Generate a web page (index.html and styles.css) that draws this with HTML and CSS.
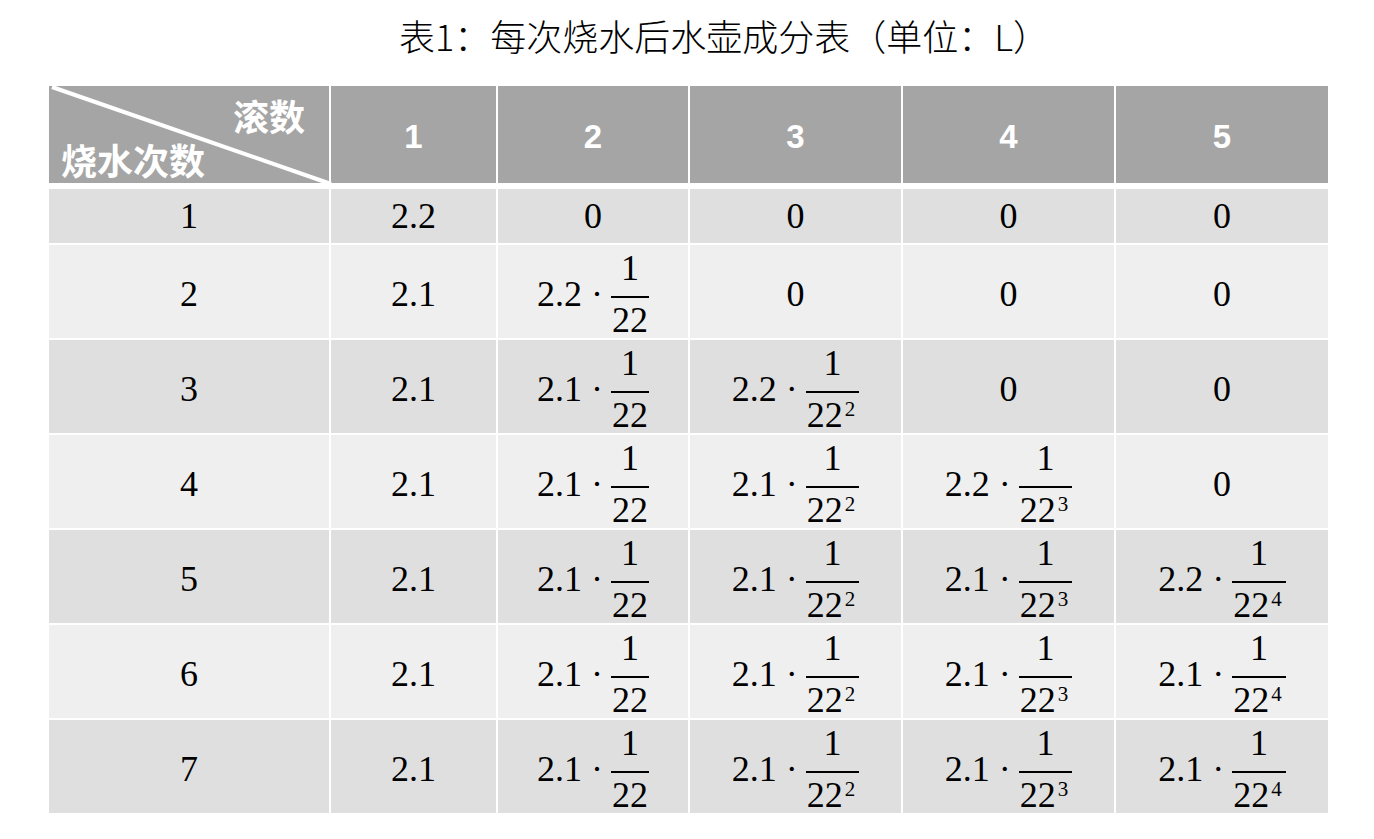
FILE: index.html
```html
<!DOCTYPE html>
<html lang="zh-CN">
<head>
<meta charset="utf-8">
<title>表1：每次烧水后水壶成分表</title>
<link rel="stylesheet" href="styles.css">
</head>
<body>
<div class="page">
  <h1 class="title">表1：每次烧水后水壶成分表（单位：L）</h1>
  <div class="table">
    <div class="row head">
      <div class="cell corner">
        <svg class="diag" viewBox="0 0 280 97" preserveAspectRatio="none"><line x1="3" y1="1" x2="282" y2="98" stroke="#fff" stroke-width="4"/></svg>
        <span class="c-top">滚数</span>
        <span class="c-bot">烧水次数</span>
      </div>
      <div class="cell hnum">1</div>
      <div class="cell hnum">2</div>
      <div class="cell hnum">3</div>
      <div class="cell hnum">4</div>
      <div class="cell hnum">5</div>
    </div>
    <div class="body">
      <div class="row r1 odd">
        <div class="cell">1</div>
        <div class="cell">2.2</div>
        <div class="cell">0</div>
        <div class="cell">0</div>
        <div class="cell">0</div>
        <div class="cell">0</div>
      </div>
      <div class="row even">
        <div class="cell">2</div>
        <div class="cell">2.1</div>
        <div class="cell"><span>2.2</span><span class="dot">·</span><span class="frac"><span class="num">1</span><span class="den">22</span></span></div>
        <div class="cell">0</div>
        <div class="cell">0</div>
        <div class="cell">0</div>
      </div>
      <div class="row odd">
        <div class="cell">3</div>
        <div class="cell">2.1</div>
        <div class="cell"><span>2.1</span><span class="dot">·</span><span class="frac"><span class="num">1</span><span class="den">22</span></span></div>
        <div class="cell"><span>2.2</span><span class="dot">·</span><span class="frac"><span class="num">1</span><span class="den">22<sup>2</sup></span></span></div>
        <div class="cell">0</div>
        <div class="cell">0</div>
      </div>
      <div class="row even">
        <div class="cell">4</div>
        <div class="cell">2.1</div>
        <div class="cell"><span>2.1</span><span class="dot">·</span><span class="frac"><span class="num">1</span><span class="den">22</span></span></div>
        <div class="cell"><span>2.1</span><span class="dot">·</span><span class="frac"><span class="num">1</span><span class="den">22<sup>2</sup></span></span></div>
        <div class="cell"><span>2.2</span><span class="dot">·</span><span class="frac"><span class="num">1</span><span class="den">22<sup>3</sup></span></span></div>
        <div class="cell">0</div>
      </div>
      <div class="row odd">
        <div class="cell">5</div>
        <div class="cell">2.1</div>
        <div class="cell"><span>2.1</span><span class="dot">·</span><span class="frac"><span class="num">1</span><span class="den">22</span></span></div>
        <div class="cell"><span>2.1</span><span class="dot">·</span><span class="frac"><span class="num">1</span><span class="den">22<sup>2</sup></span></span></div>
        <div class="cell"><span>2.1</span><span class="dot">·</span><span class="frac"><span class="num">1</span><span class="den">22<sup>3</sup></span></span></div>
        <div class="cell"><span>2.2</span><span class="dot">·</span><span class="frac"><span class="num">1</span><span class="den">22<sup>4</sup></span></span></div>
      </div>
      <div class="row even">
        <div class="cell">6</div>
        <div class="cell">2.1</div>
        <div class="cell"><span>2.1</span><span class="dot">·</span><span class="frac"><span class="num">1</span><span class="den">22</span></span></div>
        <div class="cell"><span>2.1</span><span class="dot">·</span><span class="frac"><span class="num">1</span><span class="den">22<sup>2</sup></span></span></div>
        <div class="cell"><span>2.1</span><span class="dot">·</span><span class="frac"><span class="num">1</span><span class="den">22<sup>3</sup></span></span></div>
        <div class="cell"><span>2.1</span><span class="dot">·</span><span class="frac"><span class="num">1</span><span class="den">22<sup>4</sup></span></span></div>
      </div>
      <div class="row odd">
        <div class="cell">7</div>
        <div class="cell">2.1</div>
        <div class="cell"><span>2.1</span><span class="dot">·</span><span class="frac"><span class="num">1</span><span class="den">22</span></span></div>
        <div class="cell"><span>2.1</span><span class="dot">·</span><span class="frac"><span class="num">1</span><span class="den">22<sup>2</sup></span></span></div>
        <div class="cell"><span>2.1</span><span class="dot">·</span><span class="frac"><span class="num">1</span><span class="den">22<sup>3</sup></span></span></div>
        <div class="cell"><span>2.1</span><span class="dot">·</span><span class="frac"><span class="num">1</span><span class="den">22<sup>4</sup></span></span></div>
      </div>
    </div>
  </div>
</div>
</body>
</html>
```
FILE: styles.css
```css
html, body {
  margin: 0;
  padding: 0;
  background: #ffffff;
}

.page {
  width: 1374px;
  height: 839px;
  overflow: hidden;
}

.title {
  margin: 0;
  padding: 17px 0 0 74px;
  height: 36px;
  line-height: 36px;
  text-align: center;
  font-family: "Noto Sans CJK SC", "Noto Sans", sans-serif;
  font-weight: 300;
  font-size: 36px;
  color: #000;
  white-space: nowrap;
}

.table {
  margin: 33px 0 0 49px;
  width: 1279px;
  display: flex;
  flex-direction: column;
  gap: 6px;
}

.body {
  display: flex;
  flex-direction: column;
  gap: 2px;
}

.row {
  display: grid;
  grid-template-columns: 280px 165px 190px 211px 211px 212px;
  column-gap: 2px;
  height: 93px;
}

.row.head {
  height: 97px;
}

.row.r1 {
  height: 54px;
}

.cell {
  display: flex;
  align-items: center;
  justify-content: center;
  box-sizing: border-box;
  padding-top: 5px;
  font-family: "Liberation Serif", "DejaVu Serif", serif;
  font-size: 36px;
  line-height: 1;
  color: #000;
}

.r1 .cell {
  padding-top: 0;
}

.odd .cell {
  background: #dfdfdf;
}

.even .cell {
  background: #efefef;
}

.head .cell {
  background: #a5a5a5;
  color: #fff;
}

.head .hnum {
  padding-top: 4px;
  font-family: "Liberation Sans", "Open Sans", sans-serif;
  font-weight: bold;
  font-size: 33px;
}

.head .corner {
  position: relative;
  flex-direction: column;
  align-items: stretch;
  justify-content: space-between;
  padding: 11px 24px 6px 12px;
  font-family: "Noto Sans CJK SC", "Noto Sans", sans-serif;
  font-weight: bold;
  font-size: 36px;
  line-height: 1;
}

.diag {
  position: absolute;
  left: 0;
  top: 0;
  width: 100%;
  height: 100%;
  overflow: visible;
}

.c-top {
  position: relative;
  align-self: flex-end;
}

.c-bot {
  position: relative;
  align-self: flex-start;
}

.dot {
  margin: 0 8px 0 9px;
}

.frac {
  display: inline-flex;
  flex-direction: column;
  align-items: stretch;
  text-align: center;
}

.num {
  padding-bottom: 10px;
}

.den {
  border-top: 2px solid #000;
  padding: 4px 1px 0;
}

.den sup {
  margin-left: 2px;
  margin-right: 3px;
  font-size: 21px;
  line-height: 0;
  vertical-align: 11px;
}
```
